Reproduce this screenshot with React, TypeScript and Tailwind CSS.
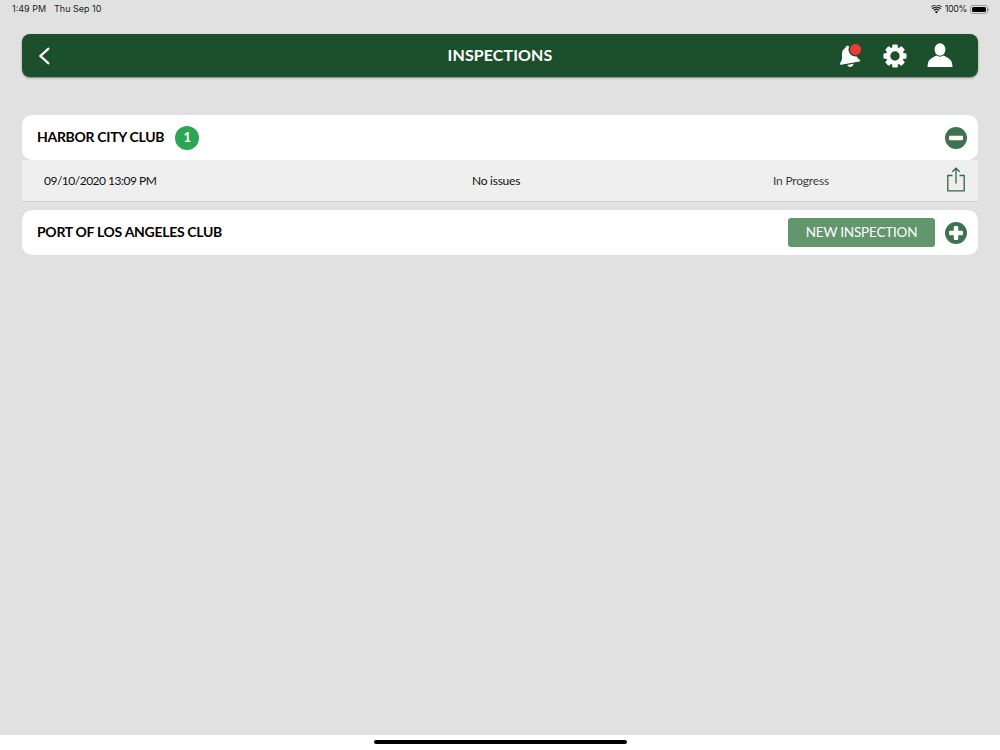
import React from "react";

const Bell = () => (
  <svg width="24" height="26" viewBox="0 0 24 26" className="block -rotate-[10deg]">
    <path d="M12 2.500c-1.100 0-1.900.8-2 1.800C6.800 5.300 5.400 8 5.200 11.400c-.2 3.400-1.400 5.500-3.200 7.200-.6.6-.3 1.600.6 1.600l18.800 0c.9 0 1.200-1 .6-1.600-1.800-1.700-3-3.800-3.200-7.200C18.600 8 17.200 5.300 14 4.300c-.1-1-.9-1.800-2-1.800z" fill="#fff" />
    <path d="M8.800 21.500a3.300 3.300 0 0 0 6.400 0z" fill="#fff" />
  </svg>
);

const Gear = () => {
  const teeth = [0, 45, 90, 135, 180, 225, 270, 315];
  return (
    <svg width="24" height="24" viewBox="0 0 26 26" className="block">
      <g fill="#fff">
        {teeth.map((a) => (
          <rect key={a} x="10" y="0.500" width="6" height="6" rx="1.400" transform={`rotate(${a} 13 13)`} />
        ))}
      </g>
      <circle cx="13" cy="13" r="7.400" fill="none" stroke="#fff" strokeWidth="4.600" />
    </svg>
  );
};

const User = () => (
  <svg width="26" height="25" viewBox="0 0 26 25" className="block">
    <ellipse cx="13" cy="6.500" rx="5.400" ry="6.200" fill="#fff" />
    <path d="M9.500 12.500c-3 1.700-7.300 3-8.300 7-.4 1.600-.7 3-.7 4.500h25c0-1.500-.3-2.900-.7-4.500-1-4-5.300-5.300-8.300-7-2 1.500-5 1.500-7 0z" fill="#fff" />
  </svg>
);

const Share = () => (
  <svg width="20" height="25" viewBox="0 0 20 25" fill="none" stroke="#2f6a44" strokeWidth="1.300" className="block">
    <path d="M6.500 8.500H1.800v15.300h16.400V8.500h-4.700" />
    <path d="M10 16.500V1.200M6.300 4.700 10 1.200l3.700 3.500" />
  </svg>
);

const Wifi = () => (
  <svg width="11" height="9" viewBox="0 0 11 9" className="block">
    <path d="M5.500 8.500 3.900 6.800a2.300 2.300 0 0 1 3.200 0z" fill="#111" />
    <path d="M2.900 5.700a3.800 3.800 0 0 1 5.200 0M1.300 4a6 6 0 0 1 8.400 0" transform="translate(0 -0.300)" fill="none" stroke="#111" strokeWidth="1.200" />
    <path d="M.3 2.400a7.400 7.400 0 0 1 10.400 0" transform="translate(0 -0.500)" fill="none" stroke="#111" strokeWidth="1" />
  </svg>
);

const Sign = ({ plus }: { plus?: boolean }) => (
  <svg width="22" height="22" viewBox="0 0 22 22" className="block">
    <circle cx="11" cy="11" r="11" fill="#3f7350" />
    <rect x="4" y="8.800" width="14" height="4.400" rx="1.200" fill="#fff" />
    {plus && <rect x="8.800" y="4" width="4.400" height="14" rx="1.200" fill="#fff" />}
  </svg>
);

export default function App() {
  return (
    <div className="flex h-[750px] w-[1000px] flex-col overflow-hidden bg-[#e1e1e1] font-['Lato','Liberation_Sans',sans-serif]">
      <div className="flex h-[18px] items-center justify-between pl-3 pr-[11px] font-['Inter','Liberation_Sans',sans-serif] text-[9px] text-[#222]">
        <div className="flex gap-2">
          <span>1:49 PM</span>
          <span>Thu Sep 10</span>
        </div>
        <div className="flex items-center gap-[3px]">
          <Wifi />
          <span className="tracking-[-0.4px]">100%</span>
          <div className="flex items-center">
            <div className="h-[9px] w-[18px] rounded-[3px] border border-[#9a9a9a] p-px">
              <div className="h-full w-full rounded-[1.500px] bg-black" />
            </div>
            <div className="h-[3px] w-px rounded-r-sm bg-[#9a9a9a]" />
          </div>
        </div>
      </div>

      <div className="relative mx-[22px] mt-4 flex h-[43px] items-center justify-between rounded-lg bg-[#1c4f2b] pl-4 pr-[25px] shadow-[0_1px_2px_rgba(0,0,0,0.45)]">
        <svg width="13" height="18" viewBox="0 0 13 18" fill="none" stroke="#fff" strokeWidth="2.300" className="block">
          <path d="M11 1.200 2.500 9l8.500 7.800" />
        </svg>
        <div className="absolute inset-x-0 top-[10px] text-center text-[16px] font-bold leading-[21px] tracking-[0.1px] text-white">INSPECTIONS</div>
        <div className="flex items-center">
          <div className="relative mr-[22px]">
            <Bell />
            <span className="absolute right-0 top-[1.500px] h-[11px] w-[11px] rounded-full bg-[#ef3b35] ring-[1.500px] ring-[#1c4f2b]" />
          </div>
          <div className="mr-5">
            <Gear />
          </div>
          <User />
        </div>
      </div>

      <div className="mx-[22px] mt-[38px] flex h-[45px] items-center justify-between rounded-[10px] bg-white pl-[15px] pr-[11px]">
        <div className="flex items-center gap-[11px]">
          <span className="-mt-[2px] text-[14px] font-bold tracking-[-0.3px] text-black">HARBOR CITY CLUB</span>
          <span className="flex h-6 w-6 items-center justify-center rounded-full bg-[#2ca655] text-[13px] font-bold text-white">1</span>
        </div>
        <Sign />
      </div>

      <div className="mx-[22px] grid h-[42px] grid-cols-[428px_301px_1fr] items-center border-b border-[#cfcfcf] bg-[#efefef] pl-[22px] pr-[12px] text-[12px] text-[#111]">
        <span className="tracking-[-0.5px]">09/10/2020 13:09 PM</span>
        <span className="tracking-[-0.25px]">No issues</span>
        <span className="col-start-3 row-start-1 tracking-[-0.2px] text-[#3d3d3d]">In Progress</span>
        <div className="col-start-3 row-start-1 -mt-[2px] flex justify-end">
          <Share />
        </div>
      </div>

      <div className="mx-[22px] mt-2 flex h-[45px] items-center justify-between rounded-[10px] bg-white pl-[15px] pr-[11px]">
        <span className="-mt-[3px] text-[14px] font-bold tracking-[-0.3px] text-black">PORT OF LOS ANGELES CLUB</span>
        <div className="flex items-center gap-[10px]">
          <button className="flex h-[29px] w-[147px] items-center justify-center rounded-[3px] bg-[#62966c] text-[13.500px] tracking-[-0.2px] text-white">NEW INSPECTION</button>
          <Sign plus />
        </div>
      </div>

      <div className="flex-1" />
      <div className="flex h-[15px] justify-center bg-white pt-[5px]">
        <div className="h-1 w-[253px] rounded-full bg-black" />
      </div>
    </div>
  );
}
